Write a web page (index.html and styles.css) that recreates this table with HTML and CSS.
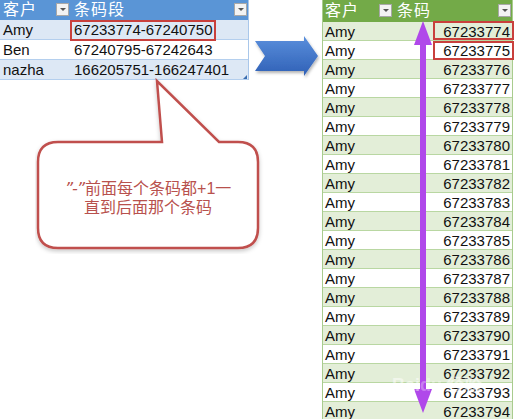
FILE: index.html
```html
<!DOCTYPE html>
<html lang="zh">
<head>
<meta charset="utf-8">
<link rel="stylesheet" href="styles.css">
</head>
<body>
<div class="page">
  <div class="ltable">
    <div class="lrow lhead">
      <div class="cell c1"><span class="htext">客户</span><span class="fbtn"></span></div>
      <div class="cell c2"><span class="htext">条码段</span><span class="fbtn"></span></div>
    </div>
    <div class="lrow band"><div class="cell c1">Amy</div><div class="cell c2">67233774-67240750</div></div>
    <div class="lrow"><div class="cell c1">Ben</div><div class="cell c2">67240795-67242643</div></div>
    <div class="lrow band"><div class="cell c1">nazha</div><div class="cell c2">166205751-166247401</div></div>
    <span class="resize"></span>
  </div>

  <div class="rtable">
    <div class="rrow rhead">
      <div class="cell rc1"><span class="htext">客户</span><span class="fbtn"></span></div>
      <div class="cell rc2"><span class="htext">条码</span><span class="fbtn"></span></div>
    </div>
    <div class="rrow band"><div class="cell rc1">Amy</div><div class="cell num">67233774</div></div>
    <div class="rrow"><div class="cell rc1">Amy</div><div class="cell num">67233775</div></div>
    <div class="rrow band"><div class="cell rc1">Amy</div><div class="cell num">67233776</div></div>
    <div class="rrow"><div class="cell rc1">Amy</div><div class="cell num">67233777</div></div>
    <div class="rrow band"><div class="cell rc1">Amy</div><div class="cell num">67233778</div></div>
    <div class="rrow"><div class="cell rc1">Amy</div><div class="cell num">67233779</div></div>
    <div class="rrow band"><div class="cell rc1">Amy</div><div class="cell num">67233780</div></div>
    <div class="rrow"><div class="cell rc1">Amy</div><div class="cell num">67233781</div></div>
    <div class="rrow band"><div class="cell rc1">Amy</div><div class="cell num">67233782</div></div>
    <div class="rrow"><div class="cell rc1">Amy</div><div class="cell num">67233783</div></div>
    <div class="rrow band"><div class="cell rc1">Amy</div><div class="cell num">67233784</div></div>
    <div class="rrow"><div class="cell rc1">Amy</div><div class="cell num">67233785</div></div>
    <div class="rrow band"><div class="cell rc1">Amy</div><div class="cell num">67233786</div></div>
    <div class="rrow"><div class="cell rc1">Amy</div><div class="cell num">67233787</div></div>
    <div class="rrow band"><div class="cell rc1">Amy</div><div class="cell num">67233788</div></div>
    <div class="rrow"><div class="cell rc1">Amy</div><div class="cell num">67233789</div></div>
    <div class="rrow band"><div class="cell rc1">Amy</div><div class="cell num">67233790</div></div>
    <div class="rrow"><div class="cell rc1">Amy</div><div class="cell num">67233791</div></div>
    <div class="rrow band"><div class="cell rc1">Amy</div><div class="cell num">67233792</div></div>
    <div class="rrow"><div class="cell rc1">Amy</div><div class="cell num">67233793</div></div>
    <div class="rrow band"><div class="cell rc1">Amy</div><div class="cell num">67233794</div></div>
  </div>

  <!-- annotations -->
  <div class="hl hl-left"></div>
  <div class="hl hl-r1"></div>
  <div class="hl hl-r2"></div>

  <svg class="bluearrow" width="80" height="50" viewBox="0 0 80 50">
    <defs>
      <linearGradient id="bg" x1="0" y1="0" x2="0" y2="1">
        <stop offset="0" stop-color="#5a8fdc"/>
        <stop offset="1" stop-color="#2f60b6"/>
      </linearGradient>
      <filter id="bs" x="-20%" y="-30%" width="140%" height="160%">
        <feDropShadow dx="1" dy="2" stdDeviation="1.5" flood-color="#000" flood-opacity="0.3"/>
      </filter>
    </defs>
    <polygon points="3,7 52,7 52,2 66,22 52,42 52,37 3,37 13,22" fill="url(#bg)" filter="url(#bs)"/>
  </svg>

  <svg class="purplearrow" width="30" height="400" viewBox="0 0 30 400">
    <rect x="12" y="20" width="6" height="360" fill="#b048ea"/>
    <polygon points="15,0 6,24 24,24" fill="#b048ea"/>
    <polygon points="15,392 6,368 24,368" fill="#b048ea"/>
  </svg>

  <div class="callout">
    <svg class="callout-shape" width="230" height="176" viewBox="0 0 230 176">
      <defs>
        <filter id="cs" x="-10%" y="-10%" width="120%" height="125%">
          <feDropShadow dx="0" dy="2" stdDeviation="2" flood-color="#000" flood-opacity="0.22"/>
        </filter>
      </defs>
      <path d="M23,64 H127 L122,3 L184,64 H203 Q223,64 223,84 V150 Q223,170 203,170 H23 Q3,170 3,150 V84 Q3,64 23,64 Z" fill="#fff" stroke="#c0504d" stroke-width="2.5" filter="url(#cs)"/>
    </svg>
    <div class="callout-text"><span class="line"><span class="q">”-”</span>前面每个条码都+1一</span><span class="line">直到后面那个条码</span></div>
  </div>

  <div class="watermark">Bai<span class="paw">du</span> 经验</div>
</div>
</body>
</html>
```

FILE: styles.css
```css
html, body {
  margin: 0;
  padding: 0;
  background: #fff;
}

body {
  font-family: "Liberation Sans", Arial, "Noto Sans CJK SC", sans-serif;
  color: #111;
}

.page {
  position: relative;
  width: 516px;
  height: 419px;
  overflow: hidden;
  display: flex;
  align-items: flex-start;
}

/* ---------- left table ---------- */
.ltable {
  position: relative;
  width: 249px;
  flex: none;
  border-right: 1px solid #a9c7ea;
  box-sizing: border-box;
}

.lrow {
  display: grid;
  grid-template-columns: 70px 1fr;
  height: 20px;
  border-bottom: 1px solid #b4cfee;
  box-sizing: border-box;
  background: #fff;
}

.lrow.band {
  background: #dde8f5;
}

.lhead {
  background: #5a95d6;
  border-bottom: 1px solid #5a95d6;
}

.cell {
  display: flex;
  align-items: center;
  justify-content: space-between;
  font-size: 15px;
  line-height: 19px;
  white-space: nowrap;
}

.c1 {
  padding-left: 3px;
}

.c2 {
  padding-left: 4px;
}

.htext {
  font-family: "Liberation Sans", "Noto Sans CJK SC", sans-serif;
  font-size: 16px;
  line-height: 17px;
  color: #fff;
  letter-spacing: 1px;
}

.fbtn {
  position: relative;
  width: 11px;
  height: 11px;
  margin-right: 1px;
  background: #f3f3f3;
  border: 1px solid #a8a8a8;
  flex: none;
}

.fbtn::after {
  content: "";
  position: absolute;
  left: 3px;
  top: 4px;
  border-left: 3px solid transparent;
  border-right: 3px solid transparent;
  border-top: 3px solid #555;
}

.resize {
  position: absolute;
  right: 1px;
  bottom: 1px;
  width: 0;
  height: 0;
  border-left: 4px solid transparent;
  border-bottom: 4px solid #3a6db0;
}

/* ---------- right table ---------- */
.rtable {
  flex: none;
  width: 191px;
  margin-left: 73px;
  border-left: 1px solid #a9cc8e;
  border-right: 1px solid #a9cc8e;
  box-sizing: border-box;
}

.rrow {
  display: grid;
  grid-template-columns: 70px 1fr;
  height: 19px;
  border-bottom: 1px solid #b9d7a2;
  box-sizing: border-box;
  background: #fff;
}

.rrow.band {
  background: #e3eed8;
}

.rhead {
  height: 22px;
  background: #73aa48;
  border-bottom: 1px solid #73aa48;
}

.rc1 {
  padding-left: 2px;
}

.rc2 {
  padding-left: 4px;
}

.num {
  justify-content: flex-end;
  padding-right: 2px;
}

/* ---------- annotations ---------- */
.hl {
  position: absolute;
  border: 2px solid #c9403c;
  box-sizing: border-box;
}

.hl-left {
  left: 70px;
  top: 20px;
  width: 146px;
  height: 21px;
}

.hl-r1 {
  left: 433px;
  top: 21px;
  width: 81px;
  height: 19px;
}

.hl-r2 {
  left: 433px;
  top: 41px;
  width: 81px;
  height: 19px;
}

.bluearrow {
  position: absolute;
  left: 252px;
  top: 34px;
}

.purplearrow {
  position: absolute;
  left: 408px;
  top: 21px;
}

.callout {
  position: absolute;
  left: 35px;
  top: 78px;
  width: 230px;
  height: 176px;
}

.callout-shape {
  position: absolute;
  left: 0;
  top: 0;
}

.callout-text {
  position: absolute;
  left: 3px;
  top: 64px;
  width: 220px;
  height: 106px;
  display: flex;
  flex-direction: column;
  align-items: center;
  justify-content: center;
  font-family: "Liberation Sans", "Noto Sans CJK SC", sans-serif;
  font-size: 16px;
  color: #b8514d;
  padding-top: 6px;
  box-sizing: border-box;
}

.callout-text .line {
  display: block;
  height: 19px;
  line-height: 19px;
  white-space: nowrap;
}

.callout-text .q {
  font-family: "DejaVu Sans", sans-serif;
  font-style: italic;
  letter-spacing: -1px;
  margin-right: 1px;
}

.watermark {
  position: absolute;
  left: 392px;
  top: 376px;
  font-family: "Liberation Sans", Arial, sans-serif;
  font-weight: bold;
  font-size: 18px;
  line-height: 18px;
  color: rgba(255, 255, 255, 0.5);
}

.watermark .paw {
  opacity: 0.6;
}
```
